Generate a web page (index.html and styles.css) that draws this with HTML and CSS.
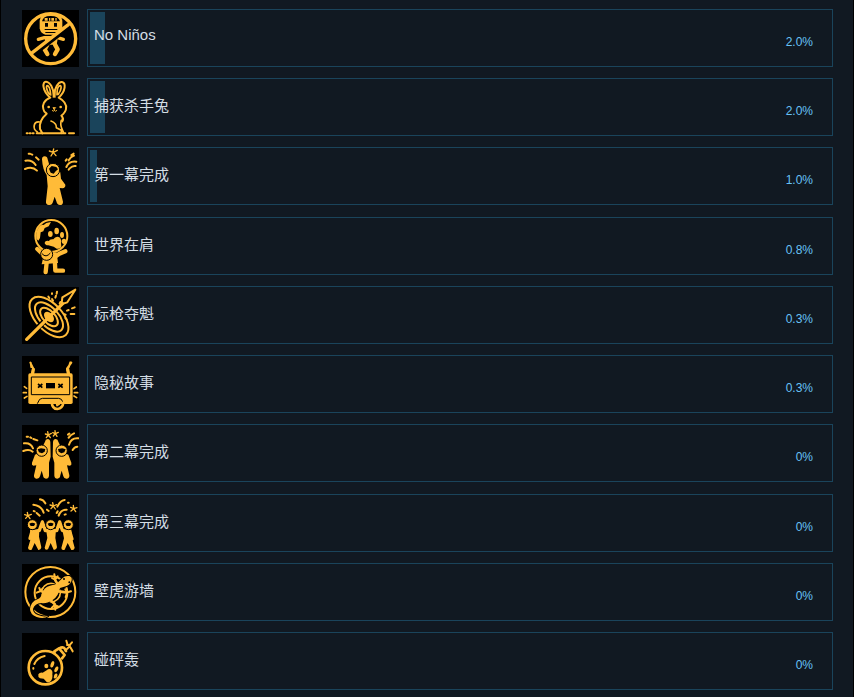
FILE: index.html
```html
<!DOCTYPE html>
<html lang="zh-CN">
<head>
  <meta charset="UTF-8">
  <meta name="viewport" content="width=device-width, initial-scale=1.0">
  <title>全球成就</title>
  <link rel="stylesheet" href="styles.css">
</head>
<body>
  <ul class="achievements">
    <li class="achieve-row">
      <svg class="achieve-img" viewBox="66 30 171 171" aria-hidden="true">
        <path class="solid" d="M119 62q0-22 34-22t34 22v23q-3 16-17 19h-34q-14-3-17-19z"/>
        <path class="cut" d="M126 64q4-17 27-16 22 0 27 16zM135 69h9v11h-9zM162 69h9v11h-9zM134 87h38v3h-38zM136 96h34v3h-34z"/>
        <path class="solid" d="M134 54h9v8h-9zM147 54h4v8h-4zM154 54h8v8h-8zM166 54h4v8h-4z"/>
        <path class="line w10" d="M115 118l18-5h40l17 5"/>
        <path class="solid" d="M133 110h41l-4 24h-33z"/>
        <path class="line w13" d="M142 134l-8 14 8 14M165 134l8 14-8 14"/>
        <path class="gap w13" d="M98 165L210 79"/>
        <circle class="line w10" cx="152" cy="116" r="75"/>
        <path class="line w10" d="M93 161L205 74"/>
      </svg>
      <div class="achieve-box">
        <div class="achieve-fill" style="width: 2%"></div>
        <h3 lang="en">No Niños</h3>
        <div class="achieve-percent">2.0%</div>
      </div>
    </li>
    <li class="achieve-row">
      <svg class="achieve-img" viewBox="18 15 171 171" aria-hidden="true">
        <path class="line w6" d="M103 71C77 50 79 22 90 23c13 1 22 20 24 43 1-24 13-43 24-42 12 2 12 28-10 47 18 10 24 24 22 34-1 9-8 15-14 20 5 5 8 9 3 17M103 71C84 78 78 94 82 105c1 8 6 11 10 14-16 14-23 29-20 46l7 13"/>
        <path class="line w5" d="M100 61c-10-14-10-26-6-26 6 1 9 15 10 28M127 61c10-14 10-27 5-26-6 1-9 15-9 27M70 144c-17-2-22 20-6 30M105 141c13 5 17 12 16 20l15 8v9M136 139c-6 16 2 24 7 38"/>
        <path class="line w6" d="M62 178h86M159 178h15M32 178h3M41 178h3M50 178h3"/>
        <path class="solid" d="M110 49h9v22h-9z"/>
        <circle class="solid" cx="98" cy="99" r="4"/>
        <circle class="solid" cx="134" cy="99" r="4"/>
        <path class="line w3" d="M112 101h7l-4 4zM115 105v4m-6 1q4 4 6-1 3 5 7 1"/>
      </svg>
      <div class="achieve-box">
        <div class="achieve-fill" style="width: 2%"></div>
        <h3>捕获杀手兔</h3>
        <div class="achieve-percent">2.0%</div>
      </div>
    </li>
    <li class="achieve-row">
      <svg class="achieve-img" viewBox="18 15 171 171" aria-hidden="true">
        <path class="solid" d="M78 49q0-9 8-9t9 9l5 17h26l7 23 2 18 13 18q1 10-8 11l-9-1 10 41q0 10-9 10t-11-11l-5-14-6 18q-2 8-12 7-9-1-8-11l5-45-3-34q-12-15-14-47z"/>
        <circle class="solid ring" cx="111" cy="81" r="20"/>
        <path class="cut" d="M99 77l8-8 14 3 5 7-7 6-6 7-9-3z"/>
        <path class="line w4" d="M110 29l3-11M112 28l12-6M112 29l8 9M111 29l-6 10M111 28l-11-4"/>
        <path class="line w6" d="M28 53q20-4 31 13M27 78q22-9 36 5M38 32h4M46 34l3 1M60 43l8 7M181 56q-22-3-30 16M158 52q6-11 16-14M166 36l7-4M152 49l-3 4M158 80l3-4q9-9 18-7"/>
      </svg>
      <div class="achieve-box">
        <div class="achieve-fill" style="width: 1%"></div>
        <h3>第一幕完成</h3>
        <div class="achieve-percent">1.0%</div>
      </div>
    </li>
    <li class="achieve-row">
      <svg class="achieve-img" viewBox="18 15 171 171" aria-hidden="true">
        <path class="solid" d="M61 77q-3-22 8-34 6-10 14-7l8-6 14-3-7 13-12 5-4 10-8 3-2 17-5 8z"/>
        <path class="solid" d="M99 84q1-6 13-5 8-12 20-5 6 8 3 16l1 12q-4 7-14 5l-9-6-16-4q-11-1-11-8 2-8 13-5z"/>
        <ellipse class="solid" cx="103" cy="63" rx="7" ry="9"/>
        <ellipse class="solid" cx="122" cy="54" rx="7" ry="10"/>
        <ellipse class="solid" cx="138" cy="66" rx="6" ry="9"/>
        <ellipse class="solid" cx="144" cy="85" rx="7" ry="8"/>
        <circle class="line w6" cx="106" cy="69" r="48"/>
        <path class="line w13" d="M64 108l17 16 32 10 17-12 18-7M94 130l-5 47M116 133l2 40h23"/>
        <path class="solid" d="M84 122l38-4 4 32-49 4z"/>
        <circle class="solid ring" cx="92" cy="124" r="18"/>
        <path class="dark" d="M78 122q12 14 25-2"/>
      </svg>
      <div class="achieve-box">
        <h3>世界在肩</h3>
        <div class="achieve-percent">0.8%</div>
      </div>
    </li>
    <li class="achieve-row">
      <svg class="achieve-img" viewBox="18 15 171 171" aria-hidden="true">
        <g transform="rotate(47 99 105)">
          <ellipse class="line w6" cx="99" cy="105" rx="74" ry="40"/>
          <ellipse class="line w6" cx="99" cy="105" rx="54" ry="28"/>
          <ellipse class="line w6" cx="99" cy="105" rx="34" ry="18"/>
          <ellipse class="solid" cx="99" cy="105" rx="18" ry="12"/>
        </g>
        <path class="gap w16" d="M30 171L84 119"/>
        <path class="line w10" d="M32 172L140 65"/>
        <path class="line w6" d="M137 65l2-19 39-23-24 38-16 5"/>
        <path class="line w6" d="M97 44l3 4M108 51l3 5M123 29l-1 6M120 41l-2 6M133 60l-2 5M108 34v2M168 79l8-3M153 86l5-2M164 96h11M145 97l4 1M148 108l4 4"/>
      </svg>
      <div class="achieve-box">
        <h3>标枪夺魁</h3>
        <div class="achieve-percent">0.3%</div>
      </div>
    </li>
    <li class="achieve-row">
      <svg class="achieve-img" viewBox="18 15 171 171" aria-hidden="true">
        <rect class="solid" x="37" y="67" width="133" height="92" rx="5"/>
        <path class="line w6" d="M48 70l4-17-9-18M159 70l-6-17 13-18M44 35l2 13M163 34l-5 15"/>
        <path class="line w10" d="M50 66l2-11M157 66l-2-11"/>
        <path class="dark" d="M46 78h115v53H46zM64 158l7-13 8-3h49l8 3 7 13"/>
        <path class="cut" d="M90 96h27v16H90z"/>
        <path class="dark thick" d="M66 99l13 11m0-11l-13 11M127 99l13 11m0-11l-13 11"/>
        <path class="line w8" d="M107 154q2 20 17 20 16-2 18-19"/>
        <path class="line w5" d="M121 155l2 9 7-5M32 112l-7-5M31 125h-9M33 136l-8 5M174 113l7-5M175 125h10M174 135l8 5"/>
      </svg>
      <div class="achieve-box">
        <h3>隐秘故事</h3>
        <div class="achieve-percent">0.3%</div>
      </div>
    </li>
    <li class="achieve-row">
      <svg class="achieve-img" viewBox="18 15 171 171" aria-hidden="true">
        <g id="cheering">
          <path class="solid" d="M87 65q1-8 8-8t8 9l1 44-5 18v39q-1 9-9 9t-9-10l-4-14-5 17q-2 8-11 7-8-1-7-10l7-30-9 1q-6-2-4-9l9-24 14-6z"/>
          <circle class="solid ring" cx="77" cy="92" r="17"/>
          <path class="cut" d="M65 88l10-3 13 2-2 8-8 5-9-3z"/>
        </g>
        <use href="#cheering" transform="translate(214 0) scale(-1 1)"/>
        <path class="line w4" d="M97 45l-2-10M97 45l9-5M97 45l6 8M97 45l-6 8M97 45l-9-3M118 41l-1-9M118 41l9-4M118 41l5 8M118 41l-6 7M118 41l-8-3"/>
        <path class="line w6" d="M24 70q20-3 27 15M22 93q17-7 28 2M32 50h4M43 52l3 2M52 57l12 4M187 55q-22-2-28 19M184 80q-9 0-14 10M158 53q6-9 16-13M156 44l4-3"/>
      </svg>
      <div class="achieve-box">
        <h3>第二幕完成</h3>
        <div class="achieve-percent">0%</div>
      </div>
    </li>
    <li class="achieve-row">
      <svg class="achieve-img" viewBox="18 15 171 171" aria-hidden="true">
        <path class="line w10" d="M42 145l5-18 23-6 9-25M168 147l-6-20-23-6-8-25M79 96l9 26h34l9-26"/>
        <path class="solid" d="M42 119h28l-1 21 7 32q-1 9-9 8l-11-21-9 20q-9 4-11-5l8-28zM90 117h30l-2 27 5 28q-2 9-10 7l-9-20-8 19q-9 4-10-5l8-29zM139 119h27l2 25 8 29q-1 9-10 7l-11-21-9 20q-9 4-10-5l8-29z"/>
        <circle class="solid ring" cx="49" cy="104" r="15"/>
        <circle class="solid ring" cx="104" cy="104" r="15"/>
        <circle class="solid ring" cx="157" cy="104" r="15"/>
        <path class="cut" d="M40 101q9-5 18 0l-4 7h-10zM95 101q9-5 18 0l-4 7h-10zM148 101q9-5 18 0l-4 7h-10z"/>
        <path class="line w4" d="M36 77l-2-10M36 77l10-4M36 77l6 9M36 77l-7 8M36 77l-10-3M112 48l-2-10M112 48l10-4M112 48l6 9M112 48l-7 8M112 48l-10-3M173 56l-1-10M173 56l10-3M173 56l6 9M173 56l-8 7M173 56l-9-4"/>
        <path class="line w6" d="M52 44q25 3 31 24M72 28q10 1 16 12M124 50q8-18 22-20M128 77q6-19 24-18M93 59l5 4M62 69l9 8M53 63l3 1M156 38h2M146 74l3-1M125 64l-3 5"/>
      </svg>
      <div class="achieve-box">
        <h3>第三幕完成</h3>
        <div class="achieve-percent">0%</div>
      </div>
    </li>
    <li class="achieve-row">
      <svg class="achieve-img" viewBox="18 15 171 171" aria-hidden="true">
        <circle class="line w6" cx="103" cy="99" r="75"/>
        <circle class="line w6" cx="105" cy="101" r="49"/>
        <circle class="line w5" cx="105" cy="101" r="28"/>
        <path class="outline" d="M139 58q7-9 21-7 9 3 7 13-3 13-15 17l-20 6q-5 26-22 36-21 13-34 9-20 2-25 18 0 12 15 18 14 7 32 3-14 10-36 3-20-8-20-24 2-21 22-29 12-4 12-15 8-22 26-26 18-3 22-8z"/>
        <path class="line w8" d="M124 74l-6-10M128 97l22 3M90 108l-12-11M102 122l14 13"/>
        <path class="line w6" d="M108 57l9 5 8-10M117 60l-2-14M148 91l6 9 11-3M153 102l-4 12M62 101l12-5 6-8M74 96l-4-9M107 147l9-9 11 5M116 138l2 14"/>
        <circle class="cut" cx="144" cy="60" r="3"/>
        <circle class="cut" cx="160" cy="70" r="3"/>
      </svg>
      <div class="achieve-box">
        <h3>壁虎游墙</h3>
        <div class="achieve-percent">0%</div>
      </div>
    </li>
    <li class="achieve-row">
      <svg class="achieve-img" viewBox="18 15 171 171" aria-hidden="true">
        <circle class="line w8" cx="88" cy="119" r="50"/>
        <path class="line w8" d="M116 77l-1-7 14-9 17 20-8 10M130 61q11-7 17 2l3 6"/>
        <path class="line w6" d="M148 68l14-14M151 38l3 10M168 43l-8 9M164 59l6 11M160 51h-7"/>
        <path class="line w6" d="M55 108q8-19 31-24M52 120v2"/>
        <path class="solid" d="M92 127q6-6 12-3 7 5 5 15 2 13-5 21-6 5-12 2l-9-10-11-1q-7-4-5-12 5-7 13-5z"/>
        <ellipse class="solid" cx="91" cy="114" rx="6" ry="7"/>
        <ellipse class="solid" cx="109" cy="109" rx="5" ry="10" transform="rotate(20 109 109)"/>
        <ellipse class="solid" cx="121" cy="124" rx="5" ry="9" transform="rotate(25 121 124)"/>
        <ellipse class="solid" cx="119" cy="144" rx="5" ry="8" transform="rotate(20 119 144)"/>
      </svg>
      <div class="achieve-box">
        <h3>碰砰轰</h3>
        <div class="achieve-percent">0%</div>
      </div>
    </li>
  </ul>
</body>
</html>
```

FILE: styles.css
```css
* {
  box-sizing: border-box;
}
body {
  margin: 0;
  padding: 0 1px;
  background: #000;
  font-family: "Liberation Sans", Arial, "Noto Sans CJK SC", sans-serif;
}
.achievements {
  display: flex;
  flex-direction: column;
  justify-content: space-between;
  gap: 11px;
  min-height: 100vh;
  margin: 0;
  padding: 9px 20px 7px 21px;
  list-style: none;
  background: #111922;
}
.achieve-row {
  display: flex;
  align-items: flex-end;
  gap: 8px;
}
.achieve-img {
  flex: none;
  width: 57px;
  height: 57px;
  background: #000;
}
.achieve-box {
  position: relative;
  flex: 1;
  display: flex;
  align-items: center;
  justify-content: space-between;
  height: 58px;
  padding: 0 19px 0 6px;
  border: 1px solid #1a445b;
}
/* the track sits behind the text, 2px inside the border */
.achieve-fill {
  position: absolute;
  top: 2px;
  bottom: 2px;
  left: 2px;
  background: #1a445b;
}
.achieve-box h3 {
  position: relative;
  margin: 0;
  padding-bottom: 2px;
  font-size: 15px;
  font-weight: normal;
  line-height: 20px;
  color: #d4dde4;
}
.achieve-box h3:lang(en) {
  padding-bottom: 6px;
}
.achieve-percent {
  padding-top: 8px;
  font-size: 12px;
  line-height: 16px;
  color: #67c1f5;
}

/* icon strokes and fills */
.solid {
  fill: #ffbb38;
}
.cut {
  fill: #000;
}
.ring {
  stroke: #000;
  stroke-width: 3;
}
.outline {
  fill: #ffbb38;
  stroke: #000;
  stroke-width: 6;
  paint-order: stroke;
}
.line {
  fill: none;
  stroke: #ffbb38;
  stroke-linecap: round;
  stroke-linejoin: round;
}
.dark {
  fill: none;
  stroke: #000;
  stroke-width: 3;
}
.thick {
  stroke-width: 5;
}
.gap {
  fill: none;
  stroke: #000;
}
.w3 { stroke-width: 3; }
.w4 { stroke-width: 4; }
.w5 { stroke-width: 5; }
.w6 { stroke-width: 6; }
.w8 { stroke-width: 8; }
.w10 { stroke-width: 10; }
.w13 { stroke-width: 13; }
.w16 { stroke-width: 16; }
```
